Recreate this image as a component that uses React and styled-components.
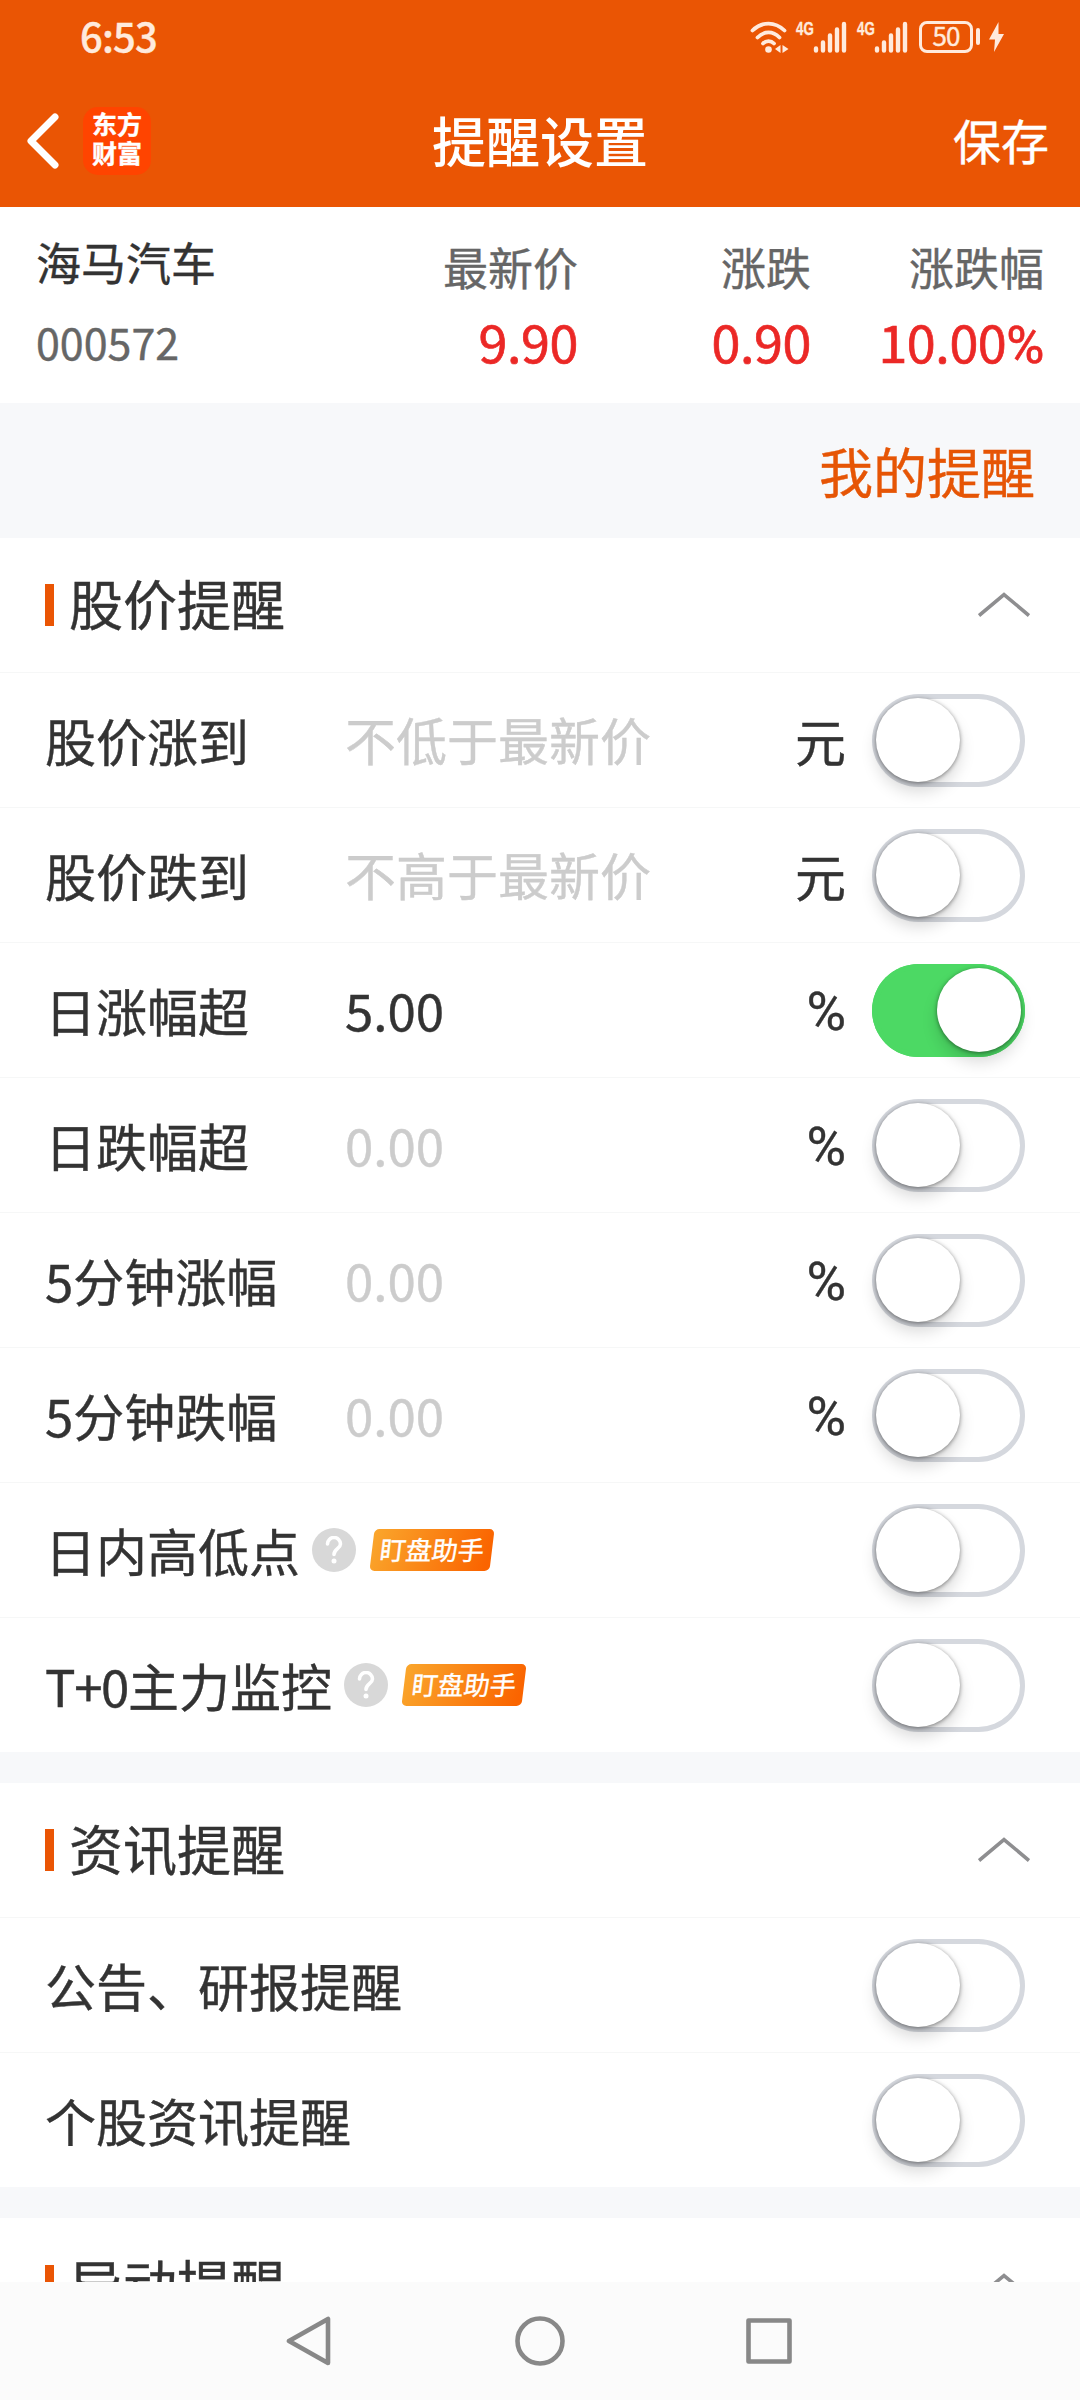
import React, { useState } from 'react';
import styled, { createGlobalStyle } from 'styled-components';

const GlobalStyle = createGlobalStyle`
  * {
    box-sizing: border-box;
  }

  body {
    margin: 0;
    background: #fff;
    color: #333;
    font-family: 'Noto Sans CJK SC', 'Noto Sans', sans-serif;
    font-size: 51px;
    line-height: 1;
    -webkit-text-stroke: 0.4px;
  }

  button {
    padding: 0;
    border: 0;
    background: none;
    color: inherit;
    font: inherit;
  }

  svg {
    display: block;
    flex: none;
  }
`;

const Screen = styled.div`
  display: flex;
  flex-direction: column;
  width: 1080px;
  height: 2400px;
  overflow: hidden;
`;

const Top = styled.header`
  flex: none;
  height: 207px;
  background: #ea5504;
  color: #fff;
`;

const StatusBar = styled.div`
  display: flex;
  align-items: center;
  justify-content: space-between;
  height: 74px;
  padding: 0 76px 0 80px;
  color: #ffeadd;
`;

const Clock = styled.span`
  padding-bottom: 4px;
  font-size: 40px;
  font-weight: 500;
  letter-spacing: -0.8px;
`;

const StatusIcons = styled.div`
  display: flex;
  align-items: center;
  padding-bottom: 1px;
`;

const Network = styled.div`
  display: flex;
  align-items: flex-start;
  width: 52px;
  height: 32px;
  margin-left: ${({ $gap }) => $gap}px;
`;

const NetworkType = styled.span`
  width: 17px;
  font-family: 'Liberation Sans', sans-serif;
  font-size: 19px;
  font-weight: 700;
  line-height: 15px;
  transform: scaleX(0.7);
  transform-origin: 0 0;
`;

const Battery = styled.div`
  display: flex;
  align-items: center;
  justify-content: center;
  width: 54px;
  height: 32px;
  margin-left: 10px;
  border: 3px solid currentColor;
  border-radius: 8px;
  font-size: 26px;
  letter-spacing: -1px;
`;

const BatteryLevel = styled.span`
  padding-bottom: 3px;
`;

const BatteryCap = styled.span`
  width: 4px;
  height: 17px;
  margin: 0 9px 0 3px;
  border-radius: 2px;
  background: currentColor;
`;

const TitleBar = styled.div`
  display: grid;
  grid-template-columns: 1fr auto 1fr;
  align-items: center;
  height: 133px;
  padding: 0 31px 0 26px;
`;

const TitleLeft = styled.div`
  display: flex;
  align-items: center;
  gap: 24px;
`;

const Logo = styled.div`
  display: flex;
  flex-direction: column;
  align-items: center;
  justify-content: center;
  width: 68px;
  height: 68px;
  padding-bottom: 5px;
  border-radius: 15px;
  background: #ff4400;
  font-size: 25px;
  font-weight: 700;
  line-height: 29px;
`;

const PageTitle = styled.h1`
  margin: 0;
  padding: 0 0 1px 5px;
  font-size: 54px;
  font-weight: 500;
  -webkit-text-stroke: 0;
`;

const SaveButton = styled.button`
  justify-self: end;
  padding-bottom: 4px;
  font-size: 48px;
`;

const Quote = styled.section`
  display: flex;
  flex: none;
  height: 196px;
  padding: 0 36px;
`;

const QuoteColumn = styled.div`
  display: flex;
  flex-direction: column;
  align-items: flex-end;
  width: ${({ $width }) => $width}px;
  padding-top: 37px;
`;

const StockColumn = styled(QuoteColumn)`
  align-items: flex-start;
  padding-top: 32px;
`;

const StockName = styled.span`
  font-size: 45px;
`;

const StockCode = styled.span`
  margin-top: 36px;
  color: #666;
  font-size: 43px;
`;

const QuoteLabel = styled.span`
  color: #666;
  font-size: 45px;
`;

const QuoteValue = styled.span`
  margin-top: 26px;
  color: #eb2826;
  font-size: 52px;
  letter-spacing: -0.4px;
  white-space: nowrap;
  -webkit-text-stroke: 0.7px;
`;

const Percent = styled.span`
  font-family: Roboto, sans-serif;
`;

const MyAlerts = styled.div`
  display: flex;
  flex: none;
  align-items: center;
  justify-content: flex-end;
  height: 135px;
  padding-right: 45px;
  background: #f7f8fa;
  color: #e65505;
  font-size: 54px;
`;

const Content = styled.main`
  flex: 1;
  min-height: 0;
  overflow: hidden;
  background: #f7f8fa;
`;

const Section = styled.section`
  margin-bottom: 31px;
  background: #fff;
`;

const Row = styled.div`
  display: flex;
  align-items: center;
  height: 135px;
  padding: 0 55px 0 45px;
  border-bottom: 1px solid #f6f7f7;

  &:last-child {
    height: 134px;
    border-bottom: 0;
  }
`;

const SectionHead = styled(Row)`
  justify-content: space-between;
  padding-right: 50px;

  &:last-child {
    height: 135px;
  }
`;

const SectionTitle = styled.h2`
  display: flex;
  align-items: center;
  gap: 15px;
  margin: 0;
  font-size: 54px;
  font-weight: 400;

  &::before {
    width: 9px;
    height: 42px;
    background: #ea5504;
    content: '';
  }
`;

const SectionName = styled.span`
  padding-bottom: 5px;
`;

const Label = styled.span`
  display: flex;
  align-items: center;
  min-width: 300px;
  white-space: nowrap;
`;

const Prefix = styled.span`
  letter-spacing: -1.4px;
`;

const Value = styled.span`
  padding-bottom: 1px;
  color: ${({ $placeholder }) => ($placeholder ? '#ccc' : '#333')};
`;

const Unit = styled.span`
  margin-left: auto;
`;

const PercentUnit = styled(Percent)`
  display: block;
  padding-top: 3px;
  font-size: 54px;
`;

const Toggle = styled.button`
  flex: none;
  width: 153px;
  height: 93px;
  margin-left: ${({ $alone }) => ($alone ? 'auto' : '26px')};
  padding: 0 ${({ $on }) => ($on ? '4px 0 65px' : '65px 0 4px')};
  border-radius: 47px;
  background: ${({ $on }) => ($on ? '#4cd964' : '#fff')};
  box-shadow: inset 0 0 0 5px ${({ $on }) => ($on ? '#4cd964' : '#d5d8de')};
`;

const Knob = styled.span`
  display: block;
  width: 84px;
  height: 84px;
  border-radius: 50%;
  background: #fff;
  box-shadow: 0 1px 4px rgba(0, 0, 0, 0.45), 0 10px 16px rgba(0, 0, 0, 0.15);
`;

const HelpIcon = styled.span`
  display: flex;
  align-items: center;
  justify-content: center;
  width: 44px;
  height: 44px;
  margin: 0 16px 0 12px;
  border-radius: 50%;
  background: #d8d8d8;
`;

const Badge = styled.span`
  display: flex;
  align-items: center;
  justify-content: center;
  width: 120px;
  height: 42px;
  border-radius: 5px;
  background: linear-gradient(105deg, #faa62c, #fa6400 95%);
  color: #fff;
  font-size: 26px;
  transform: skewX(-7deg);
`;

const BadgeText = styled.span`
  padding-bottom: 3px;
`;

const NavBar = styled.nav`
  display: flex;
  flex: none;
  align-items: center;
  justify-content: center;
  gap: 179px;
  height: 118px;
  background: #fbfbfb;
`;

const quotes = [
  { label: '最新价', value: '9.90', width: 241 },
  { label: '涨跌', value: '0.90', width: 233 },
  { label: '涨跌幅', value: '10.00', percent: true, width: 233 },
];

const sections = [
  {
    title: '股价提醒',
    rows: [
      { label: '股价涨到', placeholder: '不低于最新价', unit: '元' },
      { label: '股价跌到', placeholder: '不高于最新价', unit: '元' },
      { label: '日涨幅超', value: '5.00', placeholder: '0.00', unit: '%', on: true },
      { label: '日跌幅超', placeholder: '0.00', unit: '%' },
      { label: '5分钟涨幅', placeholder: '0.00', unit: '%' },
      { label: '5分钟跌幅', placeholder: '0.00', unit: '%' },
      { label: '日内高低点', badge: '盯盘助手' },
      { prefix: 'T+0', label: '主力监控', badge: '盯盘助手' },
    ],
  },
  {
    title: '资讯提醒',
    rows: [{ label: '公告、研报提醒' }, { label: '个股资讯提醒' }],
  },
  { title: '异动提醒', rows: [] },
];

function WifiIcon() {
  return (
    <svg width="39" height="32" viewBox="0 0 39 32" fill="none" stroke="currentColor" strokeWidth="3.8" strokeLinecap="round">
      <path d="M2.5 9.5C12 .2 25 .2 34.5 9.5M7.5 16.5C14 9.7 23 9.7 29.5 16.5M13 22.5C16 19.4 21 19.4 24 22.5" />
      <circle cx="18.5" cy="28.5" r="3.3" fill="currentColor" stroke="none" />
      <path d="M30.5 24v8L25 28zM32.5 24v8L38.5 28z" fill="currentColor" stroke="none" />
    </svg>
  );
}

function Signal({ gap }) {
  return (
    <Network $gap={gap}>
      <NetworkType>4G</NetworkType>
      <svg width="35" height="32" viewBox="0 0 35 32" stroke="currentColor" strokeWidth="4.4" strokeLinecap="round">
        <path d="M3 27.5V29.5M10 21.5V29.5M17 14.5V29.5M24 8.5V29.5M31 3V29.5" />
      </svg>
    </Network>
  );
}

function BoltIcon() {
  return (
    <svg width="15" height="30" viewBox="0 0 15 30" fill="currentColor">
      <path d="M9.5 0L0 17.5H6L5 30L15 12H9.5z" />
    </svg>
  );
}

function BackIcon() {
  return (
    <svg width="33" height="56" viewBox="0 0 33 56" fill="none" stroke="currentColor" strokeWidth="7" strokeLinecap="round" strokeLinejoin="round">
      <path d="M29 4L5 28L29 52" />
    </svg>
  );
}

function ChevronUp() {
  return (
    <svg width="52" height="28" viewBox="0 0 52 28" fill="none" stroke="#8e8e90" strokeWidth="3.6">
      <path d="M1 24.5L26 3.5L51 24.5" />
    </svg>
  );
}

function Help() {
  return (
    <HelpIcon>
      <svg width="18" height="28" viewBox="0 0 18 28" fill="none" stroke="#fff" strokeWidth="3.6" strokeLinecap="round">
        <path d="M2.5 8A6.5 6.5 0 0 1 15.5 8C15.5 12.5 9 13 9 18.5" />
        <circle cx="9" cy="25" r="2.5" fill="#fff" stroke="none" />
      </svg>
    </HelpIcon>
  );
}

function AlertRow({ row }) {
  const [on, setOn] = useState(Boolean(row.on));

  return (
    <Row>
      <Label>
        {row.prefix && <Prefix>{row.prefix}</Prefix>}
        {row.label}
        {row.badge && (
          <>
            <Help />
            <Badge>
              <BadgeText>{row.badge}</BadgeText>
            </Badge>
          </>
        )}
      </Label>
      {row.placeholder && (
        <Value $placeholder={!row.value}>{row.value || row.placeholder}</Value>
      )}
      {row.unit && (
        <Unit>{row.unit === '%' ? <PercentUnit>%</PercentUnit> : row.unit}</Unit>
      )}
      <Toggle $on={on} $alone={!row.unit} onClick={() => setOn(!on)}>
        <Knob />
      </Toggle>
    </Row>
  );
}

function App() {
  return (
    <Screen>
      <GlobalStyle />
      <Top>
        <StatusBar>
          <Clock>6:53</Clock>
          <StatusIcons>
            <WifiIcon />
            <Signal gap={7} />
            <Signal gap={9} />
            <Battery>
              <BatteryLevel>50</BatteryLevel>
            </Battery>
            <BatteryCap />
            <BoltIcon />
          </StatusIcons>
        </StatusBar>
        <TitleBar>
          <TitleLeft>
            <BackIcon />
            <Logo>
              <span>东方</span>
              <span>财富</span>
            </Logo>
          </TitleLeft>
          <PageTitle>提醒设置</PageTitle>
          <SaveButton>保存</SaveButton>
        </TitleBar>
      </Top>
      <Quote>
        <StockColumn $width={301}>
          <StockName>海马汽车</StockName>
          <StockCode>000572</StockCode>
        </StockColumn>
        {quotes.map(({ label, value, percent, width }) => (
          <QuoteColumn key={label} $width={width}>
            <QuoteLabel>{label}</QuoteLabel>
            <QuoteValue>
              {value}
              {percent && <Percent>%</Percent>}
            </QuoteValue>
          </QuoteColumn>
        ))}
      </Quote>
      <MyAlerts>我的提醒</MyAlerts>
      <Content>
        {sections.map(({ title, rows }) => (
          <Section key={title}>
            <SectionHead>
              <SectionTitle>
                <SectionName>{title}</SectionName>
              </SectionTitle>
              <ChevronUp />
            </SectionHead>
            {rows.map((row) => (
              <AlertRow key={row.label} row={row} />
            ))}
          </Section>
        ))}
      </Content>
      <NavBar>
        <svg width="50" height="50" viewBox="0 0 50 50" fill="none" stroke="#888" strokeWidth="4.6" strokeLinejoin="round">
          <path d="M42 3V47L3 25z" />
        </svg>
        <svg width="50" height="50" viewBox="0 0 50 50" fill="none" stroke="#888" strokeWidth="4.6">
          <circle cx="25" cy="25" r="22.5" />
        </svg>
        <svg width="50" height="50" viewBox="0 0 50 50" fill="none" stroke="#888" strokeWidth="4.6" strokeLinejoin="round">
          <rect x="4.5" y="4.5" width="41" height="41" />
        </svg>
      </NavBar>
    </Screen>
  );
}

export default App;
